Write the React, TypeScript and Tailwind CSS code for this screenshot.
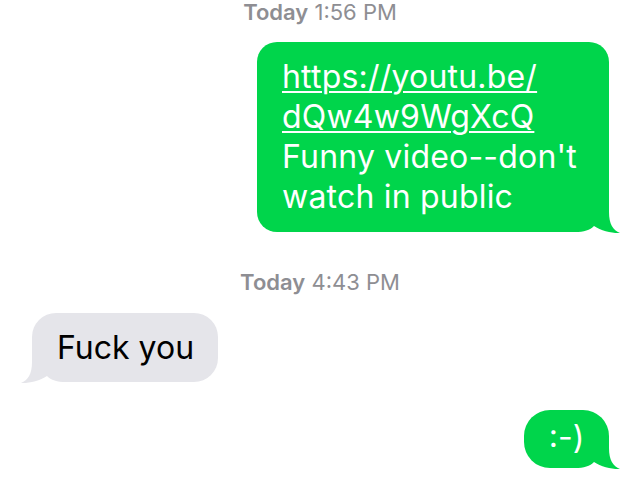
import React from "react";

const GREEN = "#00d54b";
const GRAY = "#e5e5ea";

function Tail({ color, side }: { color: string; side: "left" | "right" }) {
  return (
    <svg
      width="48"
      height="28"
      viewBox="-36 -26 48 28"
      className={
        side === "right"
          ? "absolute right-[-12px] bottom-[-2px]"
          : "absolute left-[-12px] bottom-[-2px] -scale-x-100"
      }
    >
      <rect x="-36" y="-26" width="36" height="26" fill="#ffffff" />
      <path
        d="M -36 -26 L 0 -26 L 0 -20 C 0 -8 4 -2 11 1 C 4 1.5 -8 -1 -15 -6 C -19 -2 -25 0 -34 0 L -36 0 Z"
        fill={color}
      />
    </svg>
  );
}

export default function App() {
  const font = { fontFamily: "Inter, 'Liberation Sans', sans-serif" };
  return (
    <div className="w-[640px] h-[483px] bg-white overflow-hidden flex flex-col" style={font}>
      <div className="h-[24px] text-[22px] leading-[24px] text-[#8e8e93] text-center">
        <span className="font-semibold">Today</span> 1:56 PM
      </div>

      <div className="mt-[18px] flex justify-end pr-[31px]">
        <div
          className="relative w-[352px] h-[190px] rounded-[20px] pl-[25px] py-[15px] text-white text-[32px] leading-[40px]"
          style={{ backgroundColor: GREEN }}
        >
          <div className="relative z-10 tracking-[0.2px]">
            <span className="underline decoration-[2px] underline-offset-[3px]">
              https://youtu.be/
              <br />
              dQw4w9WgXcQ
            </span>
            <br />
            Funny video--don't
            <br />
            watch in public
          </div>
          <Tail color={GREEN} side="right" />
        </div>
      </div>

      <div className="mt-[38px] h-[24px] text-[22px] leading-[24px] text-[#8e8e93] text-center">
        <span className="font-semibold">Today</span> 4:43 PM
      </div>

      <div className="mt-[19px] flex justify-start pl-[32px]">
        <div
          className="relative w-[186px] h-[69px] rounded-[24px] pl-[25px] flex items-center text-black text-[32px] leading-[40px]"
          style={{ backgroundColor: GRAY }}
        >
          <span className="relative z-10">Fuck you</span>
          <Tail color={GRAY} side="left" />
        </div>
      </div>

      <div className="mt-[28px] flex justify-end pr-[31px]">
        <div
          className="relative w-[85px] h-[58px] rounded-[26px] flex items-center justify-center text-white text-[32px] leading-[40px]"
          style={{ backgroundColor: GREEN }}
        >
          <span className="relative z-10">:-)</span>
          <Tail color={GREEN} side="right" />
        </div>
      </div>
    </div>
  );
}
